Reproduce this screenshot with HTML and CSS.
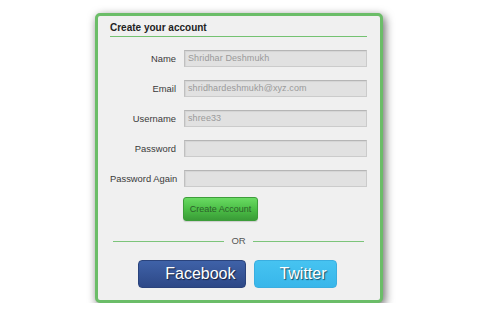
FILE: index.html
```html
<!DOCTYPE html>
<html>
<head>
<meta charset="utf-8">
<link rel="stylesheet" href="styles.css">
</head>
<body>
<div class="card">
  <div class="title">Create your account</div>
  <div class="form">
    <div class="row"><label class="lbl">Name</label><div class="input">Shridhar Deshmukh</div></div>
    <div class="row"><label class="lbl">Email</label><div class="input">shridhardeshmukh@xyz.com</div></div>
    <div class="row"><label class="lbl">Username</label><div class="input">shree33</div></div>
    <div class="row"><label class="lbl">Password</label><div class="input"></div></div>
    <div class="row"><label class="lbl">Password Again</label><div class="input"></div></div>
    <div class="row"><span></span><div><button class="create">Create Account</button></div></div>
  </div>
  <div class="or"><span class="line"></span><span class="ortext">OR</span><span class="line"></span></div>
  <div class="social">
    <button class="soc fb">Facebook</button>
    <button class="soc tw">Twitter</button>
  </div>
</div>
</body>
</html>
```
FILE: styles.css
```css
html, body { margin: 0; padding: 0; background: #fff; }
body { font-family: "Liberation Sans", Arial, sans-serif; }
.card {
  margin: 13px 0 0 95px;
  width: 257px;
  height: 284px;
  padding: 0 13px 0 12px;
  background: #f0f0f0;
  border: 3px solid #6bbd68;
  border-radius: 5px;
  box-shadow: 2px 3px 10px rgba(0,0,0,0.6);
}
.title {
  font-size: 10px;
  font-weight: bold;
  color: #222;
  line-height: 12px;
  padding-top: 6px;
  padding-bottom: 2px;
  border-bottom: 1px solid #74c271;
}
.form {
  margin-top: 13px;
  display: flex;
  flex-direction: column;
  gap: 13px;
}
.row {
  display: grid;
  grid-template-columns: 66px 183px;
  column-gap: 8px;
  align-items: center;
}
.lbl {
  text-align: right;
  font-size: 9.4px;
  color: #3a3a3a;
  white-space: nowrap;
}
.input {
  box-sizing: border-box;
  height: 17px;
  background: #e1e1e1;
  border: 1px solid #cbcbcb;
  border-top-color: #b5b5b5;
  border-left-color: #c0c0c0;
  box-shadow: inset 1px 1px 1px rgba(0,0,0,0.06);
  font-size: 9px;
  line-height: 15px;
  color: #9a9a9a;
  padding-left: 3px;
  letter-spacing: 0.1px;
}
.row:last-child { margin-top: -3px; }
.create {
  display: block;
  margin-left: -1px;
  width: 75px;
  height: 24px;
  border: 1px solid #3d9d3a;
  border-radius: 3px;
  background: linear-gradient(#6adb63, #4cbf47 50%, #3a9c37);
  color: #2c5f2a;
  font-family: "Liberation Sans", Arial, sans-serif;
  font-size: 9px;
  padding: 0;
  box-shadow: 0 1px 1px rgba(0,0,0,0.15);
}
.or {
  margin: 14px 3px 0;
  height: 12px;
  display: flex;
  align-items: center;
  gap: 7px;
}
.line { flex: 1; height: 1px; background: #7cc47a; }
.ortext { font-size: 9.5px; color: #555; line-height: 12px; }
.social {
  margin-top: 13px;
  display: flex;
  justify-content: center;
  gap: 8px;
  padding-right: 3px;
}
.soc {
  height: 28px;
  border: none;
  border-radius: 4px;
  color: #fff;
  font-family: "Liberation Sans", Arial, sans-serif;
  font-size: 16px;
  text-align: right;
  padding: 0 9px 0 0;
  text-shadow: 1px 1px 1px rgba(0,0,0,0.6);
}
.fb {
  width: 108px;
  background: linear-gradient(#3f62a8, #2d4887);
  border: 1px solid #2a437c;
}
.tw {
  width: 83px;
  background: linear-gradient(#46c3f1, #38b6ea);
  border: 1px solid #3aaee0;
}
```
